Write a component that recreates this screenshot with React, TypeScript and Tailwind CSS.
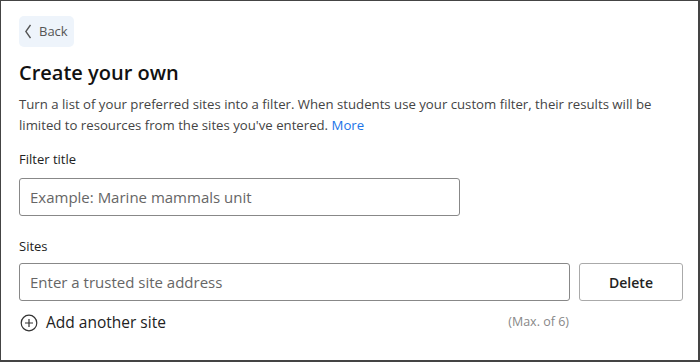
export default function App() {
  return (
    <main
      className="h-[362px] w-[700px] overflow-hidden border border-r-2 border-b-2 border-[#444] bg-white text-[#1b1b1b]"
      style={{ fontFamily: '"Segoe UI", "Open Sans", "Noto Sans", sans-serif' }}
    >
      <div className="pl-[18px] pr-[14px] pt-[15px]">
        <button
          type="button"
          className="flex h-[31px] w-[55px] items-center gap-[8px] rounded-[5px] bg-[#eef4fb] pl-[6px] text-[13px] text-[#555]"
        >
          <svg width="6" height="15" viewBox="0 0 6 15" fill="none">
            <path d="M5.5 1 L0.8 7.5 L5.5 14" stroke="#555" strokeWidth="1.4" />
          </svg>
          Back
        </button>

        <h1 className="mt-[12px] text-[20px] font-semibold leading-[28px] text-[#111]">Create your own</h1>
        <p className="mt-[7px] text-[13.2px] leading-[21px] text-[#444]">
          Turn a list of your preferred sites into a filter. When students use your custom filter, their results will be
          <br />
          limited to resources from the sites you've entered. <span className="text-[#1a73e8]">More</span>
        </p>

        <p className="mt-[14px] text-[13px] leading-[18px] text-[#222]">Filter title</p>
        <div className="mt-[10px] flex h-[38px] w-[441px] items-center rounded-[3px] border border-[#888] px-[10px] text-[15px] text-[#666]">
          Example: Marine mammals unit
        </div>

        <p className="mt-[21px] text-[13px] leading-[18px] text-[#222]">Sites</p>
        <div className="mt-[8px] flex gap-[9px]">
          <div className="flex h-[38px] w-[551px] shrink-0 items-center rounded-[3px] border border-[#888] px-[10px] text-[15px] text-[#666]">
            Enter a trusted site address
          </div>
          <button
            type="button"
            className="h-[38px] w-[104px] shrink-0 rounded-[3px] border border-[#aaa] text-[14px] font-semibold text-[#222]"
          >
            Delete
          </button>
        </div>

        <div className="mt-[10px] flex w-[551px] items-center">
          <svg width="18" height="18" viewBox="0 0 18 18" fill="none" className="ml-[1px]">
            <circle cx="9" cy="9" r="7.8" stroke="#333" strokeWidth="1.2" />
            <path d="M9 5 V13 M5 9 H13" stroke="#333" strokeWidth="1.2" />
          </svg>
          <span className="ml-[8px] text-[15.5px] text-[#222]">Add another site</span>
          <span className="ml-auto mr-[1px] text-[12.5px] text-[#888]">(Max. of 6)</span>
        </div>
      </div>
    </main>
  );
}
